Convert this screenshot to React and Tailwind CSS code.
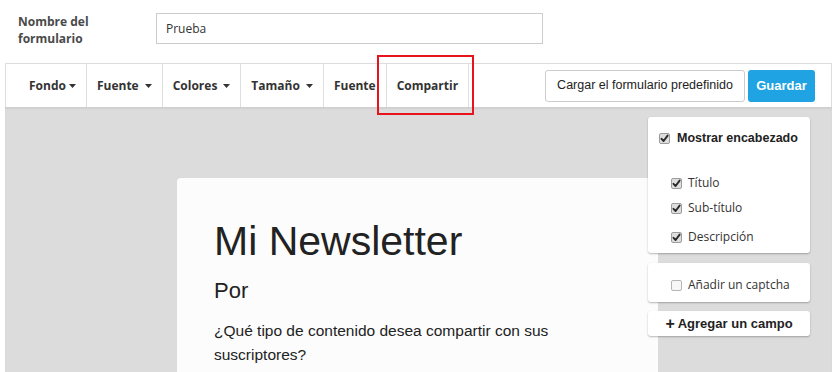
import React from "react";

const OPEN = { fontFamily: '"Open Sans", "Noto Sans", sans-serif' };
const HELV = { fontFamily: '"Liberation Sans", Arial, sans-serif' };

function Caret() {
  return (
    <svg width="7" height="4" viewBox="0 0 7 4" className="ml-[3px] mt-[1px]">
      <path d="M0 0 L7 0 L3.5 4 Z" fill="#333" />
    </svg>
  );
}

function Check({ checked = true }) {
  return (
    <span
      className={
        "inline-flex items-center justify-center w-[11px] h-[11px] rounded-[2px] border shrink-0 " +
        (checked
          ? "border-[#9c9c9c] bg-[#dedede]"
          : "border-[#b5b5b5] bg-[#f7f7f7]")
      }
    >
      {checked && (
        <svg width="9" height="9" viewBox="0 0 9 9">
          <path
            d="M1.5 4.8 L3.6 7 L7.6 1.6"
            fill="none"
            stroke="#2a2a2a"
            strokeWidth="1.9"
            strokeLinecap="round"
            strokeLinejoin="round"
          />
        </svg>
      )}
    </span>
  );
}

function NavItem({ children, caret, tight }) {
  return (
    <div className="h-full flex items-center px-[10px] border-r border-[#dedede] text-[12px] font-bold text-[#333]">
      <span>{children}</span>
      {caret && (tight ? <Caret /> : <span className="ml-[3px] flex"><Caret /></span>)}
    </div>
  );
}

export default function App() {
  return (
    <div className="w-[834px] h-[372px] overflow-hidden bg-white relative">
      {/* Header */}
      <div className="h-[63px] pt-[13px] pl-[18px] flex items-start" style={OPEN}>
        <div className="w-[138px] text-[12px] leading-[17px] font-bold text-[#4a4a4a]">
          Nombre del
          <br />
          formulario
        </div>
        <div className="w-[387px] h-[31px] border border-[#cccccc] flex items-center pl-[9px] text-[12px] text-[#333]">
          Prueba
        </div>
      </div>

      {/* Toolbar */}
      <div className="ml-[5px] mr-[2px] h-[44px] border-t border-l border-r border-[#dddddd] flex items-stretch bg-white">
        <div className="flex items-stretch pl-[13px]" style={OPEN}>
          <NavItem caret tight>Fondo</NavItem>
          <NavItem caret>Fuente</NavItem>
          <NavItem caret>Colores</NavItem>
          <NavItem caret>Tamaño</NavItem>
          <NavItem>Fuente</NavItem>
          <NavItem>Compartir</NavItem>
        </div>
        <div className="ml-auto mr-[16px] flex items-center gap-[3px]" style={HELV}>
          <button className="h-[32px] w-[200px] border border-[#cccccc] rounded-[3px] bg-white text-[12.5px] text-[#222] flex items-center justify-center">
            Cargar el formulario predefinido
          </button>
          <button className="h-[32px] w-[67px] rounded-[3px] bg-[#1fa3e3] text-[13px] font-bold text-white flex items-center justify-center">
            Guardar
          </button>
        </div>
      </div>

      {/* Canvas */}
      <div className="ml-[5px] mr-[2px] h-[265px] bg-[#dcdcdc] relative shadow-[inset_0_2px_2px_rgba(0,0,0,0.06)]">
        <div className="absolute left-[172px] top-[71px] w-[481px] h-[220px] bg-[#fcfcfc] rounded-[4px] pl-[37px] pt-[41px] text-[#222]" style={HELV}>
          <div className="text-[41px] leading-[45px]">Mi Newsletter</div>
          <div className="mt-[14px] text-[22px] leading-[26px]">Por</div>
          <div className="mt-[15px] text-[15.5px] leading-[24px] w-[370px]">
            ¿Qué tipo de contenido desea compartir con sus suscriptores?
          </div>
        </div>

        {/* Right panel */}
        <div className="absolute left-[643px] top-[10px] w-[162px] flex flex-col">
          <div className="h-[136px] bg-white rounded-[3px] shadow-[0_1px_2px_rgba(0,0,0,0.28)] pt-[12px]">
            <div className="flex items-center pl-[11px]" style={HELV}>
              <Check />
              <span className="ml-[7px] text-[12.5px] font-bold text-[#222] leading-[18px]">
                Mostrar encabezado
              </span>
            </div>
            <div className="pl-[23px] text-[12px] text-[#333]" style={OPEN}>
              <div className="mt-[27px] flex items-center h-[18px]">
                <Check />
                <span className="ml-[6px]">Título</span>
              </div>
              <div className="mt-[7px] flex items-center h-[18px]">
                <Check />
                <span className="ml-[6px]">Sub-título</span>
              </div>
              <div className="mt-[11px] flex items-center h-[18px]">
                <Check />
                <span className="ml-[6px]">Descripción</span>
              </div>
            </div>
          </div>
          <div className="mt-[10px] h-[39px] bg-white rounded-[3px] shadow-[0_1px_2px_rgba(0,0,0,0.28)] pl-[23px] pt-[13px] text-[12px] text-[#333]" style={OPEN}>
            <div className="flex items-center h-[18px]">
              <Check checked={false} />
              <span className="ml-[6px]">Añadir un captcha</span>
            </div>
          </div>
          <div className="mt-[9px] h-[25px] bg-white rounded-[3px] shadow-[0_1px_2px_rgba(0,0,0,0.28)] flex items-center justify-center text-[13px] font-bold text-[#222]" style={HELV}>
            <span className="text-[16px] leading-none mr-[3px]">+</span>
            Agregar un campo
          </div>
        </div>
      </div>

      {/* Red highlight box */}
      <div className="absolute left-[377px] top-[55px] w-[97px] h-[60px] border-2 border-[#e8141b]" />
    </div>
  );
}
